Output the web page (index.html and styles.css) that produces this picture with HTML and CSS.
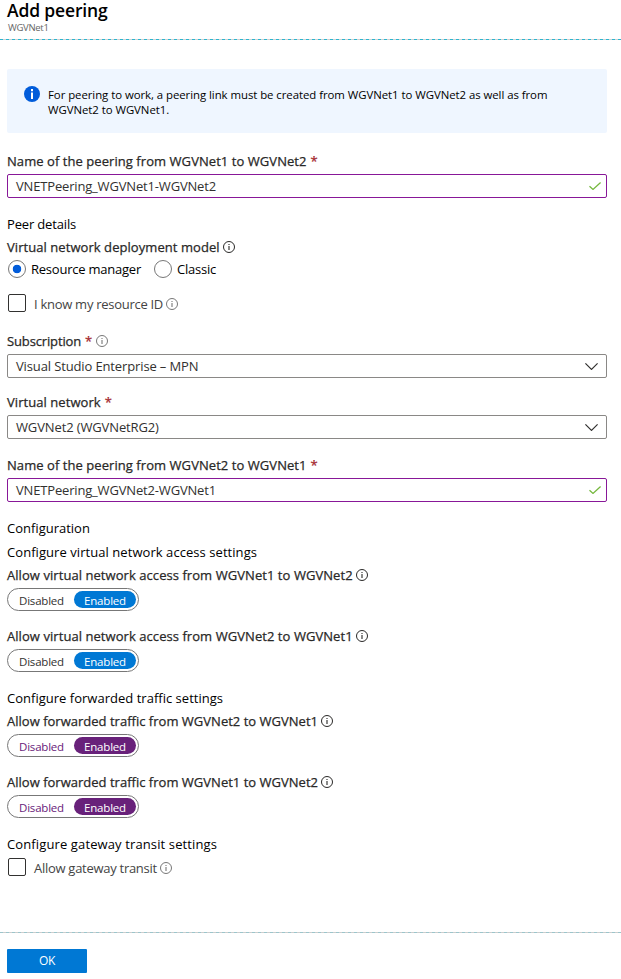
FILE: index.html
```html
<!DOCTYPE html>
<html lang="en">
<head>
<meta charset="utf-8">
<title>Add peering</title>
<link rel="stylesheet" href="styles.css">
</head>
<body>
<svg class="defs" aria-hidden="true">
  <symbol id="info" viewBox="0 0 12 12">
    <circle cx="6" cy="6" r="5.5" fill="none" stroke="currentColor"/>
    <path d="M6 5v4M6 3v1" fill="none" stroke="currentColor" stroke-width="1.1"/>
  </symbol>
  <symbol id="check" viewBox="0 0 12 8">
    <path d="M.5 4.3 4 7.4 11.6.5" fill="none" stroke="currentColor" stroke-width="1.3"/>
  </symbol>
  <symbol id="chevron" viewBox="0 0 13 7">
    <path d="M.4.4 6.5 6.4 12.6.4" fill="none" stroke="currentColor" stroke-width="1.2"/>
  </symbol>
</svg>
<header class="header">
  <h1 class="title">Add peering</h1>
  <div class="subtitle">WGVNet1</div>
</header>
<main class="form">
  <div class="notice">
    <svg class="notice-icon" viewBox="0 0 16 16"><circle cx="8" cy="8" r="8" fill="#015cda"/><path d="M8 6.5V13M8 3v2.2" stroke="#fff" stroke-width="2"/></svg>
    <p class="notice-text">For peering to work, a peering link must be created from WGVNet1 to WGVNet2 as well as from<br>WGVNet2 to WGVNet1.</p>
  </div>

  <section class="field first">
    <div class="label">Name of the peering from WGVNet1 to WGVNet2<span class="star">*</span></div>
    <div class="box edited"><span class="value name">VNETPeering_WGVNet1-WGVNet2</span><svg class="check"><use href="#check"/></svg></div>
  </section>

  <h2 class="heading peer">Peer details</h2>
  <div class="label model"><span>Virtual network deployment model</span><svg class="info"><use href="#info"/></svg></div>
  <div class="radios">
    <span class="radio on"></span><span class="option manager">Resource manager</span>
    <span class="radio"></span><span class="option">Classic</span>
  </div>
  <div class="check-row know"><span class="checkbox"></span><span class="check-text">I know my resource ID</span><svg class="info light"><use href="#info"/></svg></div>

  <section class="field subscription">
    <div class="label"><span class="tight">Subscription</span><span class="star">*</span><svg class="info light"><use href="#info"/></svg></div>
    <div class="box"><span class="value">Visual Studio Enterprise – MPN</span><svg class="chevron"><use href="#chevron"/></svg></div>
  </section>
  <section class="field network">
    <div class="label">Virtual network<span class="star">*</span></div>
    <div class="box"><span class="value">WGVNet2 (WGVNetRG2)</span><svg class="chevron"><use href="#chevron"/></svg></div>
  </section>
  <section class="field second">
    <div class="label">Name of the peering from WGVNet2 to WGVNet1<span class="star">*</span></div>
    <div class="box edited"><span class="value name">VNETPeering_WGVNet2-WGVNet1</span><svg class="check"><use href="#check"/></svg></div>
  </section>

  <h2 class="heading config">Configuration</h2>
  <h3 class="heading access">Configure virtual network access settings</h3>
  <section class="setting">
    <div class="label"><span>Allow virtual network access from WGVNet1 to WGVNet2</span><svg class="info"><use href="#info"/></svg></div>
    <div class="toggle"><span class="off">Disabled</span><span class="pill">Enabled</span></div>
  </section>
  <section class="setting">
    <div class="label"><span>Allow virtual network access from WGVNet2 to WGVNet1</span><svg class="info"><use href="#info"/></svg></div>
    <div class="toggle"><span class="off">Disabled</span><span class="pill">Enabled</span></div>
  </section>

  <h3 class="heading group">Configure forwarded traffic settings</h3>
  <section class="setting forwarded">
    <div class="label"><span>Allow forwarded traffic from WGVNet2 to WGVNet1</span><svg class="info"><use href="#info"/></svg></div>
    <div class="toggle changed"><span class="off">Disabled</span><span class="pill">Enabled</span></div>
  </section>
  <section class="setting forwarded">
    <div class="label"><span>Allow forwarded traffic from WGVNet1 to WGVNet2</span><svg class="info"><use href="#info"/></svg></div>
    <div class="toggle changed"><span class="off">Disabled</span><span class="pill">Enabled</span></div>
  </section>

  <h3 class="heading group gateway">Configure gateway transit settings</h3>
  <div class="check-row transit"><span class="checkbox"></span><span class="check-text">Allow gateway transit</span><svg class="info light"><use href="#info"/></svg></div>
</main>
<footer class="footer"><button class="ok">OK</button></footer>
</body>
</html>
```
FILE: styles.css
```css
* { box-sizing: border-box; }
body {
  margin: 0;
  height: 979px;
  overflow: hidden;
  display: flex;
  flex-direction: column;
  background: #fff;
  color: #000;
  font: 13px/18px "Open Sans", "Noto Sans", sans-serif;
}
h1, h2, h3, p { margin: 0; }
svg { flex: none; display: block; }
.defs { position: absolute; width: 0; height: 0; }

.header {
  height: 40px;
  padding: 0 7px;
  background: repeating-linear-gradient(90deg, #2cb5cf 0 3px, #d0d0d0 3px 6px) bottom / 100% 1px no-repeat;
}
.title { font-size: 17.5px; line-height: 21px; font-weight: 600; letter-spacing: -0.15px; }
.subtitle { padding-left: 1px; font-size: 9.5px; line-height: 14px; letter-spacing: -0.3px; color: #666; }

.form { flex: 1; padding: 29px 14px 0 7px; }
.notice {
  display: flex;
  gap: 8px;
  height: 64px;
  padding: 17px 17px 0;
  border-radius: 2px;
  background: #eff6ff;
}
.notice-icon { width: 16px; height: 16px; }
.notice-text { padding-top: 1px; font-size: 11.4px; line-height: 15px; letter-spacing: -0.05px; white-space: nowrap; }

.label {
  display: flex;
  align-items: center;
  height: 18px;
  font-weight: 500;
  letter-spacing: 0.06px;
  color: #292827;
  white-space: nowrap;
  -webkit-text-stroke: 0.25px currentColor;
}
.tight { letter-spacing: -0.14px; }
.star { margin-left: 4px; color: #a4262c; }
.info { width: 12px; height: 12px; margin-left: 3px; color: #292827; }
.info.light { color: #777; }
.star + .info { margin-left: 4px; }

.field .label { margin-bottom: 4px; }
.first { margin-top: 19px; }
.subscription { margin-top: 20px; }
.network { margin-top: 15px; }
.second { margin-top: 17px; }
.box {
  display: flex;
  align-items: center;
  justify-content: space-between;
  height: 24px;
  padding: 0 8px;
  border: 1px solid #8a8886;
  border-radius: 2px;
  color: #323130;
}
.box.edited { padding-right: 5px; border-color: #881798; }
.value { letter-spacing: -0.13px; }
.value.name { letter-spacing: -0.17px; }
.check { width: 12px; height: 8px; color: #74b73c; }
.chevron { width: 13px; height: 7px; color: #323130; }

.heading { height: 18px; font-size: 13px; font-weight: 400; letter-spacing: 0.06px; }
.peer { margin-top: 17px; letter-spacing: -0.16px; }
.model { margin-top: 5px; }
.radios { display: flex; align-items: center; height: 18px; margin-top: 4px; padding-left: 1px; letter-spacing: -0.23px; }
.radio { width: 18px; height: 18px; margin-right: 5px; border: 1px solid #777; border-radius: 50%; }
.radio.on { background: radial-gradient(circle, #015cda 4px, transparent 4.6px); }
.manager { margin-right: 13px; }
.check-row { display: flex; align-items: center; height: 18px; padding-left: 1px; }
.checkbox { width: 18px; height: 18px; margin-right: 8px; border: 1px solid #323130; border-radius: 2px; }
.check-text { padding-top: 2px; letter-spacing: -0.28px; color: #444; }
.know { margin-top: 16px; }
.check-row .info { margin-top: 2px; }
.config { margin-top: 17px; letter-spacing: 0; }
.access { margin-top: 6px; }
.setting { margin-top: 5px; }
.setting + .setting { margin-top: 16px; }
.forwarded .label { letter-spacing: 0.013px; }
.group { margin-top: 17px; letter-spacing: 0.016px; }
.gateway { letter-spacing: 0.12px; }
.transit { margin-top: 5px; }

.toggle {
  display: flex;
  justify-content: space-between;
  width: 132px;
  height: 23px;
  margin-top: 4px;
  padding: 2px 2px 2px 11px;
  border: 1px solid #777;
  border-radius: 12px;
  font-size: 11.5px;
  line-height: 20px;
  letter-spacing: -0.2px;
  color: #323130;
}
.pill { width: 62px; height: 17px; border-radius: 9px; background: #0078d4; color: #fff; text-align: center; }
.changed .off { color: #68217a; }
.changed .pill { background: #68217a; }

.footer {
  height: 47px;
  padding: 17px 7px 0;
  background: repeating-linear-gradient(90deg, #9cc5cb 0 3px, #cdcdcd 3px 6px) top / 100% 1px no-repeat;
}
.ok {
  display: block;
  width: 80px;
  height: 24px;
  padding: 0;
  border: 0;
  border-radius: 1px;
  background: #0078d4;
  color: #fff;
  font: 500 12px/24px "Open Sans", sans-serif;
  letter-spacing: -0.4px;
}
```
